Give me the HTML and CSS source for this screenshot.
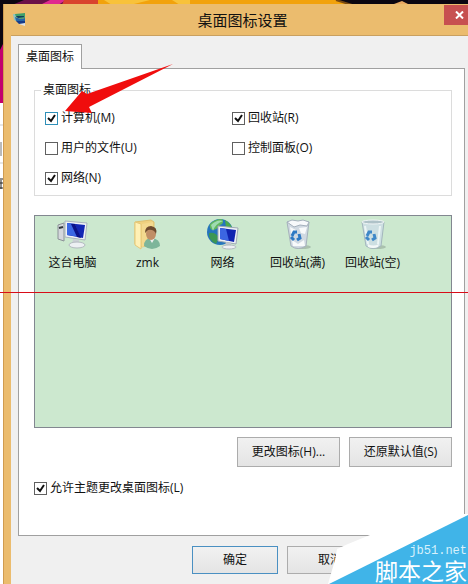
FILE: index.html
```
<!DOCTYPE html>
<html lang="zh-CN">

<head>
    <meta charset="utf-8">
    <title>桌面图标设置</title>

    <link rel="stylesheet" href="styles.css">
</head>

<body>

    <!-- Desktop behind the window -->
    <svg class="wallpaper" width="468" height="200" viewBox="0 0 468 200">
        <rect width="468" height="103" fill="#0b0610" />
        <path d="M24 0H74L62 5H12Z" fill="#6b1048" />
        <path d="M50 0H66L58 5H40Z" fill="#e0288f" />
        <path d="M64 0H100V5H62Z" fill="#d9432e" />
        <path d="M98 0H336L352 5H98Z" fill="#f2a20c" />
        <path d="M104 0H150L130 5H112Z M172 0H190V5H180Z" fill="#f8c23a" />
        <path d="M336 0L352 5" stroke="#7a4a10" stroke-width="2" />
        <path d="M394 4L402 1L408 4Z" fill="#e8a860" />
        <path d="M0 50L4 42V103H0Z" fill="#c2006e" />
        <rect y="103" width="4" height="97" fill="#fff" />
        <path d="M0 125H4M0 163H4" stroke="#ccc" />
        <path d="M1 142V156" stroke="#777" />
        <path d="M0 179H3M0 183H3M1 180V189M0 188H4" stroke="#222" />
    </svg>

    <div class="window">
        <header class="titlebar">
            <svg class="titlebar-icon" width="14" height="14" viewBox="0 0 14 14">
                <path d="M0 1L3 1V8L1 7Z" fill="#8fc4c0" />
                <path d="M2 1L12 0V5L8 6L3 4Z" fill="#3ea06c" />
                <path d="M2 4L8 6L12 5V9L3 8Z" fill="#2466a8" />
                <path d="M3 3L11 3V4L5 5Z" fill="#123c5c" />
                <path d="M3 8L12 8V11L6 11Z" fill="#173b88" />
                <path d="M6 11L12 10V13Z" fill="#e1e5e8" />
            </svg>
            <h1>桌面图标设置</h1>
            <button class="close-button" aria-label="关闭">
                <svg width="9" height="8" viewBox="0 0 9 8">
                    <path d="M1 0.5L8 7.5M8 0.5L1 7.5" stroke="#fff" stroke-width="2" />
                </svg>
            </button>
        </header>

        <main class="client">
            <button class="tab">桌面图标</button>

            <section class="panel">
                <fieldset class="group">
                    <legend>桌面图标</legend>
                    <label class="check"><input type="checkbox" class="focused" checked>计算机(M)</label>
                    <label class="check"><input type="checkbox" checked>回收站(R)</label>
                    <label class="check"><input type="checkbox">用户的文件(U)</label>
                    <label class="check"><input type="checkbox">控制面板(O)</label>
                    <label class="check"><input type="checkbox" checked>网络(N)</label>
                </fieldset>

                <ul class="icons">
                    <li>
                        <svg width="34" height="32" viewBox="0 0 34 32">
                            <path d="M2 7L8 5V23L2 21Z" fill="#d5d8dc" stroke="#8c9298" />
                            <path d="M3 10L7 9" stroke="#30363c" stroke-width="2" />
                            <path d="M9 3L31 5L29 22L9 19Z" fill="#eef1f5" stroke="#a9b2bd" />
                            <path d="M11 5L29 7L27 20L11 17Z" fill="#1226b4" />
                            <path d="M11 5L19 6L24 19L11 17Z" fill="#3a67e4" />
                            <path d="M15 6L19 6L25 20L21 19Z" fill="#0a1288" />
                            <path d="M17 21L23 22V26H16Z" fill="#cbd0d6" />
                            <ellipse cx="21" cy="27" rx="8" ry="3" fill="#edf0f3" stroke="#b3bac0" />
                        </svg>
                        这台电脑
                    </li>
                    <li>
                        <svg width="34" height="32" viewBox="0 0 34 32">
                            <path d="M4 4L20 2L23 4V27L10 29L4 26Z" fill="#efd17f" stroke="#dfc070" />
                            <path d="M4 4L10 6V31L4 27Z" fill="#fff0b5" stroke="#e5c878" />
                            <path d="M11 6L22 4V27L11 29Z" fill="#f3d98f" />
                            <path d="M13 28Q13 20 21 20Q29 21 29 28Q21 34 13 28Z" fill="#7db59a" />
                            <path d="M18 20L21 25L24 20Z" fill="#eee" />
                            <ellipse cx="20" cy="16" rx="5" ry="6" fill="#c08e66" />
                            <path d="M14 15Q14 8 20 8Q27 9 25 16Q23 11 17 12Z" fill="#6d4a2e" />
                        </svg>
                        zmk
                    </li>
                    <li>
                        <svg width="34" height="32" viewBox="0 0 34 32">
                            <circle cx="14" cy="14" r="13" fill="#2575bd" />
                            <path d="M4 6Q9 1 16 1Q19 5 14 7Q11 12 6 12Q3 10 4 6Z" fill="#60b85c" />
                            <path d="M19 2Q26 6 26 12L20 9Z" fill="#4caa4b" />
                            <path d="M3 15Q10 14 13 20L10 26Q2 22 3 15Z" fill="#3b9655" />
                            <path d="M5 7Q11 1 17 3Q9 6 7 13Z" fill="#b9e9d5" opacity="0.7" />
                            <path d="M12 8L32 10L30 26L12 23Z" fill="#eef1f5" stroke="#9ea8b4" />
                            <path d="M14 10L30 12L28 24L14 21Z" fill="#1024b0" />
                            <path d="M14 10L20 11L23 23L14 21Z" fill="#3c66e2" />
                            <path d="M20 24L25 25V28H19Z" fill="#c2c7cd" />
                            <ellipse cx="23" cy="29" rx="7" ry="2" fill="#edf0f3" stroke="#b3bac0" />
                        </svg>
                        网络
                    </li>
                    <li>
                        <svg width="34" height="32" viewBox="0 0 34 32">
                            <ellipse cx="21" cy="29" rx="9" ry="2" fill="#879a8d" opacity="0.5" />
                            <path d="M6 4L28 4L25 28Q17 33 10 28Z" fill="#d0d9e2" stroke="#a5b1bb" />
                            <path d="M6 4L11 2L17 3L22 2L28 4L26 8L19 7L13 9Z" fill="#f7f9fb" stroke="#a4b0bc" />
                            <path d="M9 9L15 12L13 18L10 16ZM18 10L26 9L24 16L20 15ZM11 22L17 26L23 22L24 28L12 28Z" fill="#f8fafb" />
                            <path d="M11 18L13 14L16 14M18 16L19 20L16 22M13 22L10 19" fill="none" stroke="#2d79c4" stroke-width="3" />
                        </svg>
                        回收站(满)
                    </li>
                    <li>
                        <svg width="34" height="32" viewBox="0 0 34 32">
                            <ellipse cx="21" cy="29" rx="9" ry="2" fill="#879a8d" opacity="0.5" />
                            <path d="M6 4L28 4L25 28Q17 33 10 28Z" fill="#cddfe2" stroke="#a3b6bd" />
                            <ellipse cx="17" cy="4" rx="11" ry="2" fill="#afc2c8" stroke="#f0f5f6" />
                            <path d="M9 8L12 26M24 8L22 26" stroke="#edf5f5" stroke-width="2" />
                            <path d="M12 26Q17 29 23 26L22 29Q17 31 12 29Z" fill="#f4f8f8" />
                            <path d="M11 18L13 14L16 14M18 16L19 20L16 22M13 22L10 19" fill="none" stroke="#3f88c8" stroke-width="3" />
                        </svg>
                        回收站(空)
                    </li>
                </ul>

                <div class="panel-buttons">
                    <button>更改图标(H)...</button>
                    <button>还原默认值(S)</button>
                </div>

                <label class="check"><input type="checkbox" checked>允许主题更改桌面图标(L)</label>
            </section>

            <footer class="dialog-buttons">
                <button class="default">确定</button>
                <button>取消</button>
            </footer>
        </main>
    </div>

    <!-- Annotations -->
    <svg class="arrow" width="110" height="50" viewBox="0 0 110 50">
        <path d="M108 0L22 30L17 27L0 47L27 49L24 43Z" fill="#f00d0d" />
    </svg>

    <div class="red-line"></div>

    <div class="watermark">
        <svg width="140" height="90" viewBox="0 0 140 90">
            <path d="M0 90L7 66L9 55L20 50L42 41L48 34L136 16V20H140V90Z" fill="#fff" />
            <path d="M1 90L140 21V90Z" fill="#40b4e8" />
        </svg>
        <span class="watermark-site">jb51.net</span>
        <span class="watermark-name">脚本之家</span>
    </div>

</body>

</html>
```
FILE: styles.css
```
* {
    box-sizing: border-box;
}

body {
    position: relative;
    display: flex;
    min-height: 100vh;
    margin: 0;
    padding: 4px 0 0 3px;
    overflow: hidden;
    background: #fff;
    color: #111;
    font: 12px/18px "Open Sans", "Noto Sans CJK SC", sans-serif;
}

button {
    padding: 0;
    color: inherit;
    font: inherit;
}

.wallpaper {
    position: absolute;
    left: 0;
    top: 0;
    z-index: -1;
}

/* Window */

.window {
    display: flex;
    flex-direction: column;
    flex: 1;
    padding-left: 7px;
    background: #ebbc6e;
    border-left: 1px solid #d09c50;
}

.titlebar {
    display: flex;
    align-items: center;
    height: 31px;
}

.titlebar-icon {
    margin-left: 2px;
}

.titlebar h1 {
    flex: 1;
    margin: 0;
    padding-left: 14px;
    font-size: 15px;
    font-weight: normal;
    text-align: center;
}

.close-button {
    display: flex;
    justify-content: center;
    align-items: center;
    align-self: flex-start;
    width: 24px;
    height: 20px;
    margin-top: 1px;
    padding-left: 7px;
    border: 0;
    background: #c75050;
}

.client {
    display: flex;
    flex-direction: column;
    flex: 1;
    padding: 8px 3px 10px 7px;
    background: #f0f0f0;
    border-top: 1px solid #c9a060;
}

/* Tab and its page */

.tab {
    z-index: 1;
    align-self: flex-start;
    width: 64px;
    height: 25px;
    margin-bottom: -1px;
    border: 1px solid #a0a0a0;
    border-bottom: 0;
    background: #fff;
}

.panel {
    flex: 1;
    padding: 12px 12px 0 15px;
    border: 1px solid #a0a0a0;
    background: #fff;
}

.group {
    display: grid;
    grid-template-columns: 187fr 209fr;
    row-gap: 12px;
    margin: 0;
    padding: 10px 10px 8px;
    border: 1px solid #dcdcdc;
}

.group legend {
    padding: 0 2px;
    margin-left: -4px;
}

.check {
    display: flex;
    align-items: center;
    gap: 3px;
}

.check input {
    width: 13px;
    height: 13px;
    margin: 0;
    appearance: none;
    border: 1px solid #606060;
    background: #fff;
}

.check input:checked {
    background: #fff url("data:image/svg+xml,%3Csvg xmlns='http://www.w3.org/2000/svg' viewBox='0 0 11 11'%3E%3Cpath d='M2 5l3 3 4-6' fill='none' stroke='%23111' stroke-width='2'/%3E%3C/svg%3E");
}

.check input.focused {
    border-color: #2f8fb8;
}

.icons {
    display: flex;
    height: 213px;
    margin: 19px 0 9px;
    padding: 2px 0 0;
    border: 1px solid #828790;
    background: #cce8cf;
    list-style: none;
}

.icons li {
    display: flex;
    flex-direction: column;
    align-items: center;
    gap: 4px;
    width: 75px;
}

.panel-buttons,
.dialog-buttons {
    display: flex;
    justify-content: flex-end;
    gap: 9px;
}

.panel-buttons {
    margin-bottom: 12px;
}

.panel-buttons button,
.dialog-buttons button {
    width: 103px;
    height: 30px;
    border: 1px solid #acacac;
    background: linear-gradient(#f1f1f1, #e4e4e4);
}

.dialog-buttons {
    padding: 10px 92px 0 0;
}

.dialog-buttons button {
    width: 86px;
    height: 28px;
}

.dialog-buttons .default {
    border-color: #4a90c2;
}

/* Annotations over the window */

.arrow {
    position: absolute;
    left: 65px;
    top: 64px;
    z-index: 2;
}

.red-line {
    position: absolute;
    left: 0;
    top: 292px;
    width: 100%;
    height: 1px;
    background: #d80c18;
}

.watermark {
    position: absolute;
    right: 0;
    bottom: 0;
    z-index: 1;
    display: flex;
    flex-direction: column;
    justify-content: flex-end;
    align-items: flex-end;
    width: 140px;
    height: 90px;
    padding-right: 1px;
    color: #fff;
}

.watermark svg {
    position: absolute;
    left: 0;
    top: 0;
    z-index: -1;
}

.watermark-site {
    color: #d8f1fc;
    font: 12px/12px "Liberation Mono", monospace;
}

.watermark-name {
    font: 23px/27px "Noto Sans CJK SC", sans-serif;
    white-space: nowrap;
}
```
